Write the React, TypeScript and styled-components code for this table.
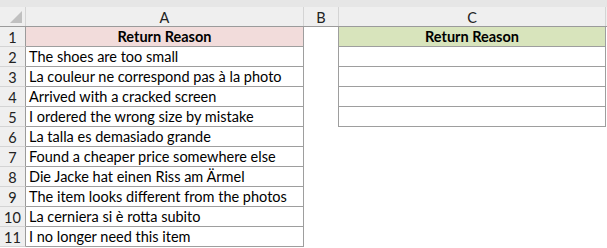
import React from "react";
import styled, { createGlobalStyle } from "styled-components";

const GlobalStyle = createGlobalStyle`
  html, body { margin: 0; padding: 0; background: #ffffff; }
  body { font-family: "Lato", "Open Sans", sans-serif; }
`;

const Sheet = styled.div`
  width: 607px;
  height: 248px;
  overflow: hidden;
  background: #ffffff;
  display: flex;
  flex-direction: column;
`;

const TopBand = styled.div`
  height: 7px;
  background: #e6e6e6;
  flex: none;
`;

const HeaderRow = styled.div`
  display: flex;
  height: 20px;
  flex: none;
  background: #efefef;
  border-bottom: 1px solid #9b9b9b;
  box-sizing: border-box;
`;

const ColHead = styled.div<{ $w: number }>`
  width: ${(p) => p.$w}px;
  flex: none;
  box-sizing: border-box;
  border-right: 1px solid #d4d4d4;
  display: flex;
  align-items: center;
  justify-content: center;
  font-size: 14.5px;
  color: #222;
  padding-top: 1px;
`;

const Corner = styled.div`
  width: 26px;
  flex: none;
  box-sizing: border-box;
  border-right: 1px solid #d4d4d4;
  position: relative;
`;

const Triangle = styled.div`
  position: absolute;
  right: 3px;
  bottom: 3px;
  width: 0;
  height: 0;
  border-style: solid;
  border-width: 0 0 12px 12px;
  border-color: transparent transparent #c0c0c0 transparent;
`;

const Row = styled.div`
  display: flex;
  height: 20px;
  flex: none;
`;

const RowHead = styled.div`
  width: 26px;
  flex: none;
  box-sizing: border-box;
  background: #efefef;
  border-right: 1px solid #9b9b9b;
  border-bottom: 1px solid #d4d4d4;
  display: flex;
  align-items: center;
  justify-content: center;
  font-size: 14.5px;
  color: #222;
  padding-top: 1px;
`;

const Cell = styled.div<{ $w: number; $bg?: string; $bordered?: boolean; $left?: boolean; $bold?: boolean; $center?: boolean }>`
  width: ${(p) => p.$w}px;
  flex: none;
  box-sizing: border-box;
  background: ${(p) => p.$bg || "#ffffff"};
  border-right: ${(p) => (p.$bordered ? "1px solid #9e9e9e" : "none")};
  border-bottom: ${(p) => (p.$bordered ? "1px solid #9e9e9e" : "none")};
  border-left: ${(p) => (p.$left ? "1px solid #9e9e9e" : "none")};
  font-weight: ${(p) => (p.$bold ? 700 : 400)};
  text-align: ${(p) => (p.$center ? "center" : "left")};
  padding: 1px 0 0 ${(p) => (p.$center ? 0 : 3)}px;
  font-size: 14.5px;
  line-height: 18px;
  color: #000;
  white-space: nowrap;
  overflow: hidden;
`;

const reasons = [
  "The shoes are too small",
  "La couleur ne correspond pas à la photo",
  "Arrived with a cracked screen",
  "I ordered the wrong size by mistake",
  "La talla es demasiado grande",
  "Found a cheaper price somewhere else",
  "Die Jacke hat einen Riss am Ärmel",
  "The item looks different from the photos",
  "La cerniera si è rotta subito",
  "I no longer need this item",
];

export default function App() {
  return (
    <>
      <GlobalStyle />
      <Sheet>
        <TopBand />
        <HeaderRow>
          <Corner>
            <Triangle />
          </Corner>
          <ColHead $w={278}>A</ColHead>
          <ColHead $w={35}>B</ColHead>
          <ColHead $w={267}>C</ColHead>
        </HeaderRow>
        <Row>
          <RowHead>1</RowHead>
          <Cell $w={278} $bg="#f2dcdb" $bordered $bold $center>
            Return Reason
          </Cell>
          <Cell $w={34} />
          <Cell $w={268} $bg="#d8e4bc" $bordered $left $bold $center>
            Return Reason
          </Cell>
        </Row>
        {reasons.map((r, i) => (
          <Row key={i}>
            <RowHead>{i + 2}</RowHead>
            <Cell $w={278} $bordered>
              {r}
            </Cell>
            <Cell $w={34} />
            {i < 4 ? <Cell $w={268} $bordered $left /> : <Cell $w={268} />}
          </Row>
        ))}
      </Sheet>
    </>
  );
}
